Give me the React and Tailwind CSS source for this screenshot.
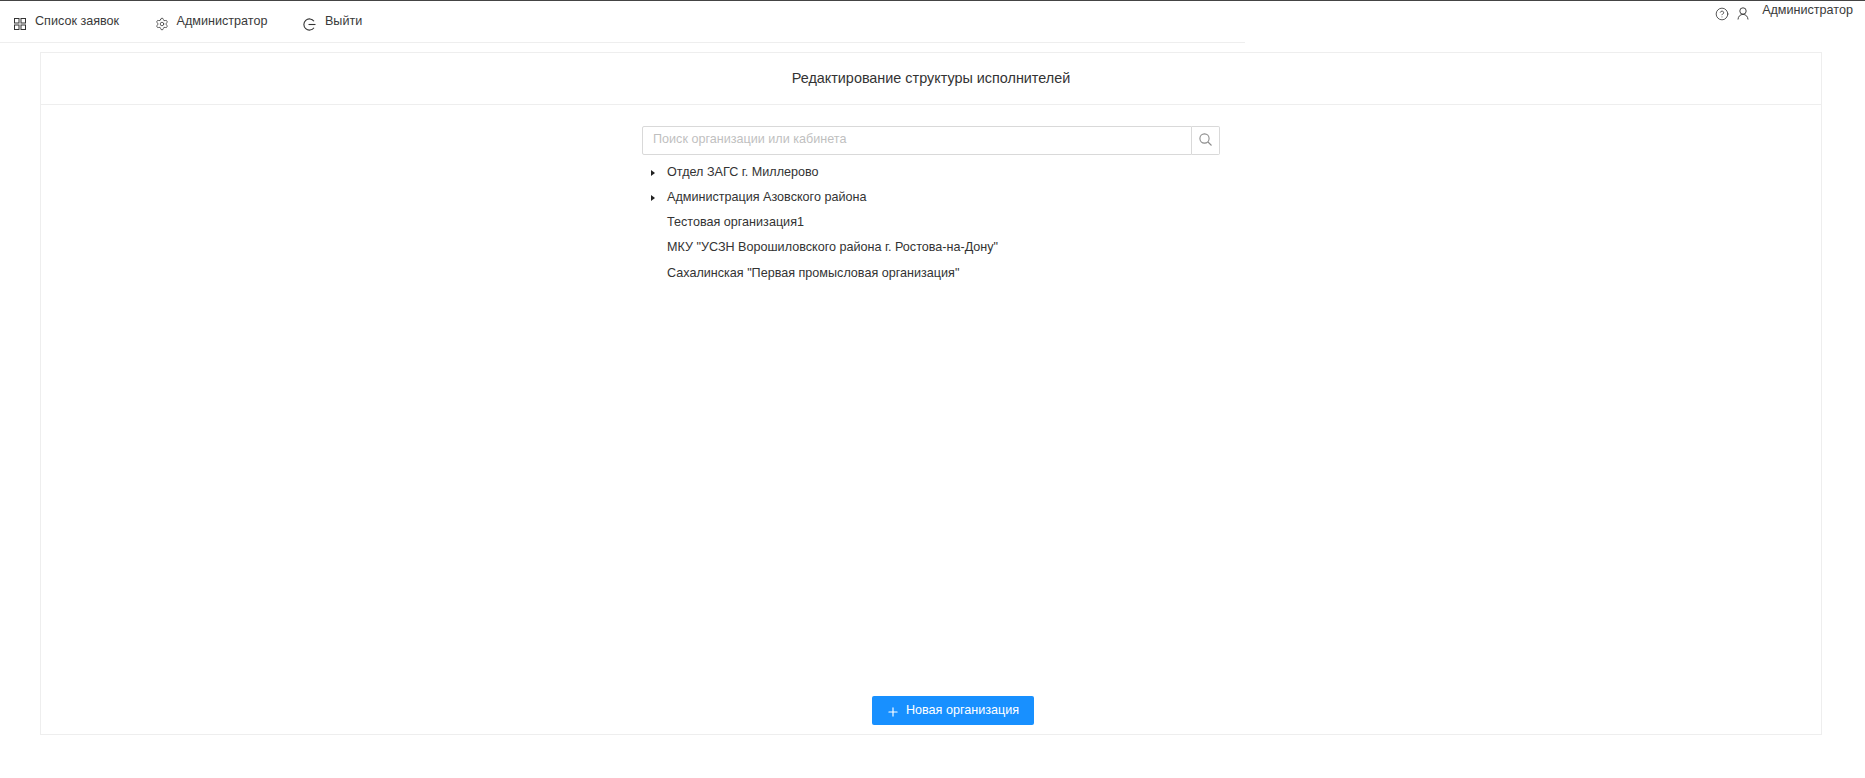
import React from "react";
import { Plus, CircleHelp, Settings } from "lucide-react";

const orgs = [
  { name: "Отдел ЗАГС г. Миллерово", children: true },
  { name: "Администрация Азовского района", children: true },
  { name: "Тестовая организация1" },
  { name: 'МКУ "УСЗН Ворошиловского района г. Ростова-на-Дону"' },
  { name: 'Сахалинская "Первая промысловая организация"' },
];

function AppstoreIcon() {
  return (
    <svg className="w-[12px] h-[12px]" viewBox="0 0 12 12" fill="none" stroke="#333" strokeWidth="1">
      <rect x="0.5" y="0.5" width="4.5" height="4.5" />
      <rect x="7" y="0.5" width="4.5" height="4.5" />
      <rect x="0.5" y="7" width="4.5" height="4.5" />
      <rect x="7" y="7" width="4.5" height="4.5" />
    </svg>
  );
}

function LogoutIcon() {
  return (
    <svg className="w-[13px] h-[13px]" viewBox="0 0 13 13" fill="none" stroke="#333" strokeWidth="1.1">
      <path d="M11 3.2A5.6 5.6 0 1 0 11 9.8" />
      <path d="M5.5 6.5H12.5" />
    </svg>
  );
}

function UserIcon() {
  return (
    <svg className="w-[12px] h-[13px] mt-[6px] ml-[8px]" viewBox="0 0 12 13" fill="none" stroke="#444" strokeWidth="1">
      <circle cx="6" cy="4" r="3.2" />
      <path d="M1 12.5C1.2 9.4 3.2 7.4 6 7.4C8.8 7.4 10.8 9.4 11 12.5" />
    </svg>
  );
}

function SearchIcon() {
  return (
    <svg className="w-[13px] h-[13px] mb-[2px]" viewBox="0 0 13 13" fill="none" stroke="#8c8c8c" strokeWidth="1.1">
      <circle cx="5.5" cy="5.5" r="4.6" />
      <path d="M9 9L12.5 12.5" />
    </svg>
  );
}

function NavItem({ icon, label }) {
  return (
    <div className="flex items-start">
      <span className="w-[14px] h-[14px] mt-[16px] mr-[8px] flex items-center justify-center">{icon}</span>
      <span className="mt-[11px] leading-[18px]">{label}</span>
    </div>
  );
}

export default function App() {
  return (
    <div className="h-[778px] bg-white border-t border-[#444] text-[12.6px] text-[#3a3a3a] font-['Liberation_Sans',Arial,sans-serif] overflow-hidden">
      <div className="flex h-[42px]">
        <nav className="w-[1245px] h-[42px] border-b border-[#eeeeee] flex pl-[13px] gap-[35.5px]">
          <NavItem icon={<AppstoreIcon />} label="Список заявок" />
          <NavItem icon={<Settings size={14} strokeWidth={1.3} color="#333" />} label="Администратор" />
          <NavItem icon={<LogoutIcon />} label="Выйти" />
        </nav>
        <div className="flex-1 flex justify-end items-start pr-[12px]">
          <CircleHelp size={14} strokeWidth={1.4} color="#333" className="mt-[6px]" />
          <UserIcon />
          <span className="ml-[13px] mt-[2px] leading-[14px]">Администратор</span>
        </div>
      </div>
      <main className="mt-[9px] ml-[40px] mr-[43px] h-[683px] border border-[#eeeeee] flex flex-col">
        <h1 className="h-[52px] border-b border-[#eeeeee] flex items-center justify-center text-[14.4px] text-[#333] font-normal">
          Редактирование структуры исполнителей
        </h1>
        <div className="flex-1 pt-[21px] pl-[601px]">
          <div className="flex w-[578px] h-[29px]">
            <div className="flex-1 border border-[#d9d9d9] rounded-l-[2px] flex items-center pl-[10px] pb-[3px] text-[#bfbfbf]">
              Поиск организации или кабинета
            </div>
            <div className="w-[28px] border border-l-0 border-[#d9d9d9] rounded-r-[2px] flex items-center justify-center">
              <SearchIcon />
            </div>
          </div>
          <ul className="mt-[5px] ml-[1px] text-[#333]">
            {orgs.map((org, i) => (
              <li key={org.name} className={i === 4 ? "h-[25px] mt-[1px] flex items-center" : "h-[25px] flex items-center"}>
                <span className="w-[24px] pl-[8px] flex items-center">
                  {org.children && (
                    <span className="border-y-[3.5px] border-l-[4px] border-y-transparent border-l-[#222]" />
                  )}
                </span>
                {org.name}
              </li>
            ))}
          </ul>
        </div>
        <div className="flex justify-center pb-[9px]">
          <button className="w-[162px] h-[29px] bg-[#1890ff] text-white rounded-[2px] flex items-center justify-center ml-[43px]">
            <Plus size={14} strokeWidth={2} className="mr-[6px] mt-[2px]" />
            <span className="mb-[1px]">Новая организация</span>
          </button>
        </div>
      </main>
    </div>
  );
}
